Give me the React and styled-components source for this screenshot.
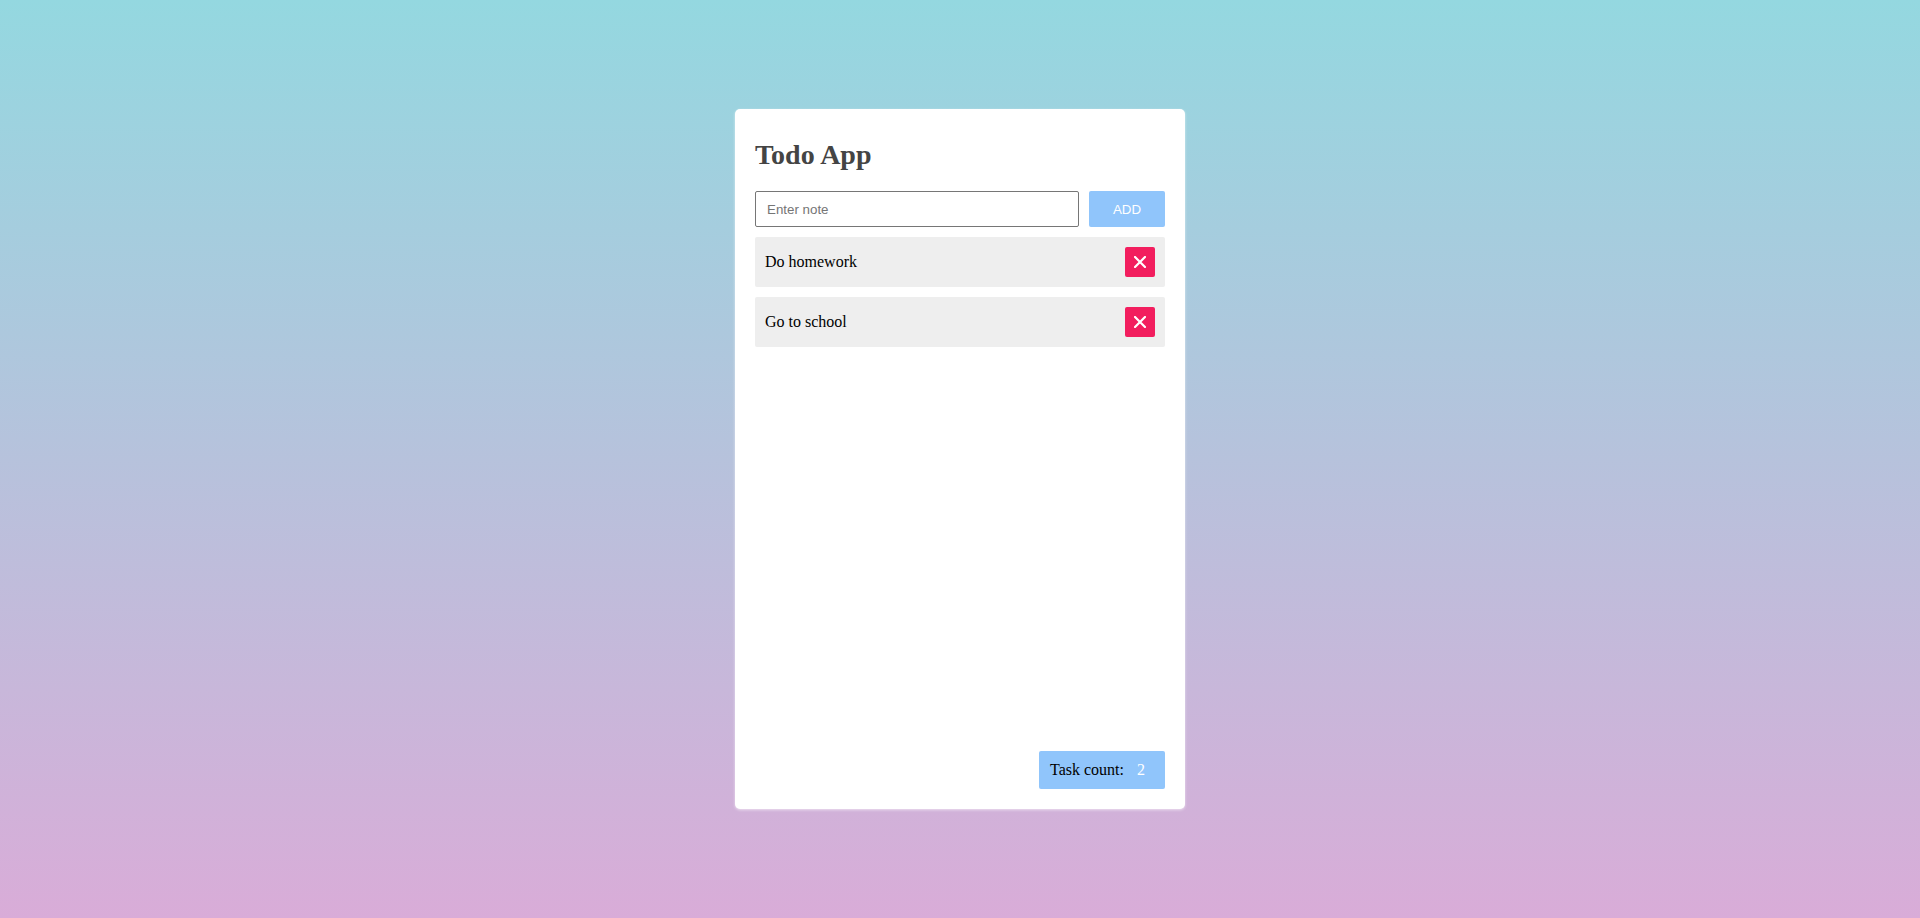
import React, { useState } from "react";
import styled, { createGlobalStyle } from "styled-components";

const Global = createGlobalStyle`
  html, body { margin: 0; padding: 0; }
  body {
    min-height: 918px;
    background: linear-gradient(to bottom, #94d8e0 0%, #d9acd8 100%);
    font-family: "Liberation Serif", "Times New Roman", serif;
  }
`;

const Page = styled.div`
  height: 918px;
  display: flex;
  justify-content: center;
  align-items: flex-start;
  padding-top: 109px;
  box-sizing: border-box;
`;

const Card = styled.div`
  width: 450px;
  height: 700px;
  box-sizing: border-box;
  padding: 20px;
  background: #fff;
  border-radius: 5px;
  box-shadow: 0 1px 3px rgba(255, 255, 255, 0.6);
  display: flex;
  flex-direction: column;
`;

const Title = styled.h1`
  margin: 10px 0 0;
  font-size: 28px;
  line-height: 32px;
  font-weight: bold;
  color: #444;
`;

const Form = styled.form`
  display: flex;
  gap: 10px;
  margin-top: 20px;
`;

const Input = styled.input`
  flex: 1;
  height: 36px;
  box-sizing: border-box;
  border: 1px solid #767676;
  border-radius: 2px;
  padding: 0 11px;
  font-family: "Liberation Sans", Arial, sans-serif;
  font-size: 13.33px;
  color: #222;
  outline: none;
  &::placeholder { color: #757575; }
`;

const AddButton = styled.button`
  width: 76px;
  height: 36px;
  border: none;
  border-radius: 2px;
  background: #90c5fb;
  color: #fff;
  font-family: "Liberation Sans", Arial, sans-serif;
  font-size: 13.33px;
  cursor: pointer;
`;

const List = styled.ul`
  list-style: none;
  margin: 10px 0 0;
  padding: 0;
  display: flex;
  flex-direction: column;
  gap: 10px;
  flex: 1;
`;

const Item = styled.li`
  height: 50px;
  box-sizing: border-box;
  background: #eee;
  border-radius: 2px;
  display: flex;
  align-items: center;
  justify-content: space-between;
  padding: 0 10px;
  font-size: 16px;
  color: #000;
`;

const DeleteButton = styled.button`
  width: 30px;
  height: 30px;
  border: none;
  border-radius: 2px;
  background: #f21e5e;
  display: flex;
  align-items: center;
  justify-content: center;
  padding: 0;
  cursor: pointer;
`;

const Footer = styled.div`
  display: flex;
  justify-content: flex-end;
`;

const Counter = styled.div`
  width: 126px;
  height: 38px;
  box-sizing: border-box;
  background: #90c5fb;
  border-radius: 2px;
  display: flex;
  align-items: center;
  padding-left: 11px;
  font-size: 16px;
  color: #000;
`;

const Count = styled.span`
  color: #fff;
  margin-left: 13px;
`;

const CloseIcon = () => (
  <svg width="12" height="12" viewBox="0 0 12 12">
    <path d="M1 1 L11 11 M11 1 L1 11" stroke="#fff" strokeWidth="2.2" strokeLinecap="square" />
  </svg>
);

export default function App() {
  const [todos, setTodos] = useState(["Do homework", "Go to school"]);
  const [text, setText] = useState("");
  const add = (e) => {
    e.preventDefault();
    if (text.trim()) {
      setTodos([...todos, text.trim()]);
      setText("");
    }
  };
  return (
    <>
      <Global />
      <Page>
        <Card>
          <Title>Todo App</Title>
          <Form onSubmit={add}>
            <Input placeholder="Enter note" value={text} onChange={(e) => setText(e.target.value)} />
            <AddButton type="submit">ADD</AddButton>
          </Form>
          <List>
            {todos.map((t, i) => (
              <Item key={i}>
                {t}
                <DeleteButton onClick={() => setTodos(todos.filter((_, j) => j !== i))}>
                  <CloseIcon />
                </DeleteButton>
              </Item>
            ))}
          </List>
          <Footer>
            <Counter>
              Task count:<Count>{todos.length}</Count>
            </Counter>
          </Footer>
        </Card>
      </Page>
    </>
  );
}
